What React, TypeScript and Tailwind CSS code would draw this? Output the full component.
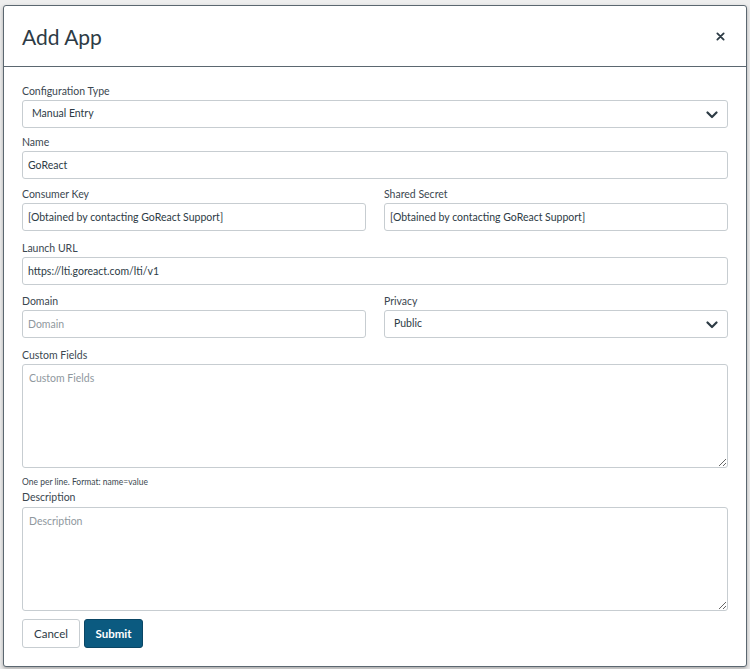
import React from 'react';

const font = { fontFamily: 'Lato, "Open Sans", "Liberation Sans", sans-serif' };

const Label = ({ children }: { children: React.ReactNode }) => (
  <label className="block text-[10.5px] leading-[17px] text-[#3b4750]">{children}</label>
);

const inputCls =
  'block w-full h-[28px] rounded-[3px] border border-[#c7cdd1] bg-white px-[5px] text-[10.5px] text-[#2d3b45] placeholder:text-[#8f989e] outline-none';

const areaCls =
  'block w-full rounded-[3px] border border-[#c7cdd1] bg-white px-[6px] py-[6px] text-[10.5px] text-[#2d3b45] placeholder:text-[#8f989e] outline-none';

const Chevron = () => (
  <svg className="absolute right-[9px] top-[9px] w-[12px] h-[10px]" viewBox="0 0 12 10" fill="none">
    <path d="M1.5 2.5 L6 7 L10.5 2.5" stroke="#2d3b45" strokeWidth="2.2" strokeLinecap="round" strokeLinejoin="round" />
  </svg>
);

const Select = ({ value }: { value: string }) => (
  <div className="relative h-[28px] rounded-[3px] border border-[#c7cdd1] bg-white flex items-center pl-[9px] text-[10.5px] text-[#2d3b45]">
    {value}
    <Chevron />
  </div>
);

export default function App() {
  return (
    <div className="w-[750px] h-[669px] bg-[#eeeeee] pt-[5px] pl-[3px] overflow-hidden" style={font}>
      <div className="w-[744px] h-[662px] bg-white border border-[#5b6770] rounded-[3px] shadow-[0_2px_4px_rgba(0,0,0,0.3)] flex flex-col">
        {/* Header */}
        <div className="h-[61px] flex items-center justify-between pl-[18px] pr-[21px] border-b border-[#5b6770] shrink-0">
          <h2 className="text-[21px] text-[#2d3b45] font-normal leading-none">Add App</h2>
          <svg className="w-[9px] h-[9px]" viewBox="0 0 10 10">
            <path d="M1.5 1.5 L8.5 8.5 M8.5 1.5 L1.5 8.5" stroke="#2d3b45" strokeWidth="2" strokeLinecap="round" />
          </svg>
        </div>

        {/* Body */}
        <form className="px-[18px] pt-[16px] flex flex-col">
          <div>
            <Label>Configuration Type</Label>
            <Select value="Manual Entry" />
          </div>

          <div className="mt-[6px]">
            <Label>Name</Label>
            <input className={inputCls} defaultValue="GoReact" />
          </div>

          <div className="mt-[7px] grid grid-cols-2 gap-x-[18px]">
            <div>
              <Label>Consumer Key</Label>
              <input className={inputCls} defaultValue="[Obtained by contacting GoReact Support]" />
            </div>
            <div>
              <Label>Shared Secret</Label>
              <input className={inputCls} defaultValue="[Obtained by contacting GoReact Support]" />
            </div>
          </div>

          <div className="mt-[9px]">
            <Label>Launch URL</Label>
            <input className={inputCls} defaultValue="https://lti.goreact.com/lti/v1" />
          </div>

          <div className="mt-[8px] grid grid-cols-2 gap-x-[18px]">
            <div>
              <Label>Domain</Label>
              <input className={inputCls} placeholder="Domain" />
            </div>
            <div>
              <Label>Privacy</Label>
              <Select value="Public" />
            </div>
          </div>

          <div className="mt-[9px]">
            <Label>Custom Fields</Label>
            <textarea className={`${areaCls} h-[104px]`} placeholder="Custom Fields" />
            <p className="mt-[8px] text-[8.5px] leading-[13px] text-[#3b4750]">One per line. Format: name=value</p>
          </div>

          <div>
            <Label>Description</Label>
            <textarea className={`${areaCls} mt-[1px] h-[104px]`} placeholder="Description" />
          </div>

          <div className="mt-[8px] flex gap-[4px]">
            <button type="button" className="h-[29px] w-[58px] rounded-[3px] border border-[#c7cdd1] bg-white text-[11.5px] text-[#2d3b45]">
              Cancel
            </button>
            <button type="button" className="h-[29px] w-[59px] rounded-[3px] border border-[#0a4665] bg-[#0b5a80] text-[11.5px] font-bold text-white">
              Submit
            </button>
          </div>
        </form>
      </div>
    </div>
  );
}
